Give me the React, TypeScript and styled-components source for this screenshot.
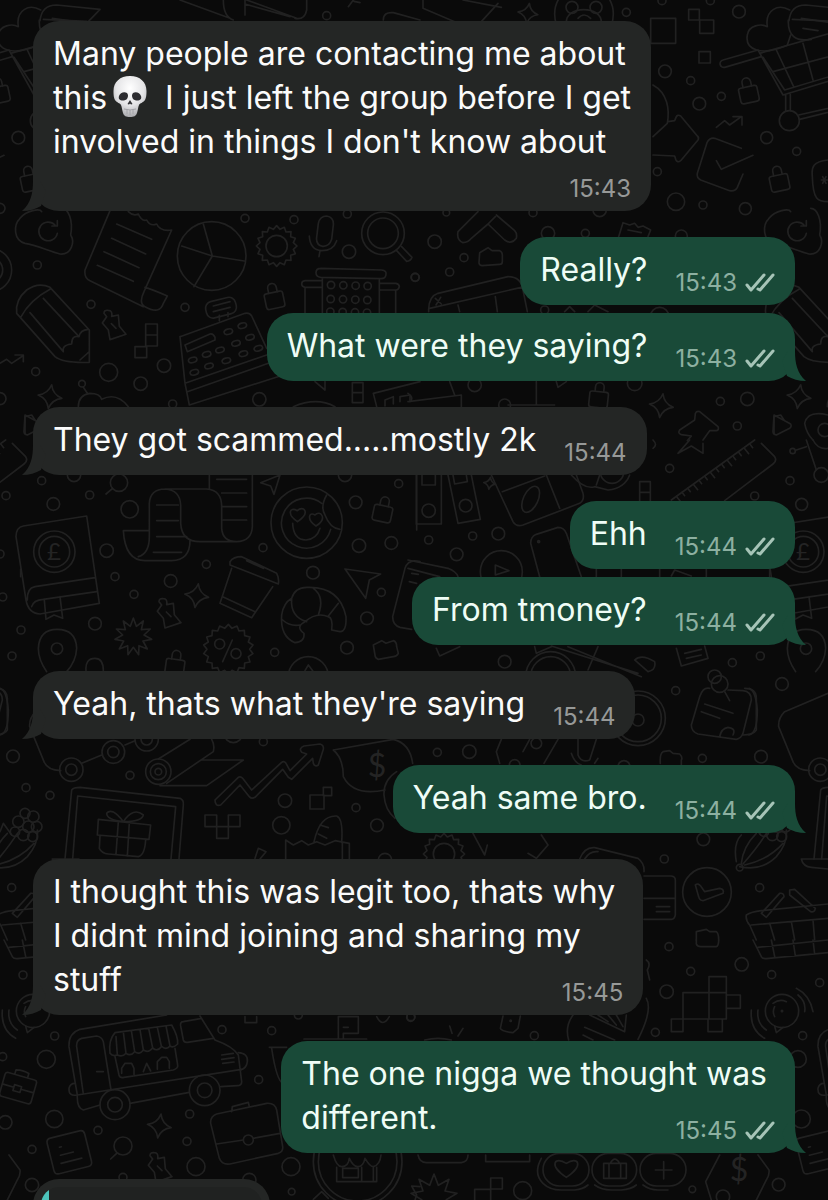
import React, { createContext, useContext } from "react";
import styled, { createGlobalStyle, css } from "styled-components";

const GlobalStyle = createGlobalStyle`
  *, *::before, *::after { box-sizing: border-box; }
  body {
    margin: 0;
    background: #0a0a0a;
    font-family: Inter, "Liberation Sans", sans-serif;
  }
`;

/* ---------- Wallpaper ---------- */

const Wallpaper = styled.svg`
  position: absolute;
  inset: 0;
  width: 100%;
  height: 100%;
  fill: none;
  stroke: #212121;
  stroke-width: 5;
  stroke-linecap: round;
  stroke-linejoin: round;
`;

const Currency = styled.text`
  fill: #242424;
  stroke: none;
  font-family: Lato, sans-serif;
  text-anchor: middle;
`;

type Dot = [number, number, number];

const Rings = ({ at }: { at: Dot[] }) => (
  <>
    {at.map(([cx, cy, r], i) => (
      <circle key={i} cx={cx} cy={cy} r={r} />
    ))}
  </>
);

/* Loose bubbles belong to the middle tile only; its neighbours repeat just the sketches. */
const LooseDots = createContext(true);

const Dots = ({ at }: { at: Dot[] }) => (useContext(LooseDots) ? <Rings at={at} /> : null);

/* Sketches are drawn on a grid three times finer than the page. */
const Region = ({ x, y, children }: { x: number; y: number; children: React.ReactNode }) => (
  <g transform={`translate(${x} ${y}) scale(0.33333)`}>{children}</g>
);

const Sparkle = ({ x, y, s = 36 }: { x: number; y: number; s?: number }) => (
  <path
    transform={`translate(${x} ${y}) rotate(8)`}
    d={`M0 ${-s} Q${s * 0.2} ${-s * 0.2} ${s} 0 Q${s * 0.2} ${s * 0.2} 0 ${s} Q${-s * 0.2} ${s * 0.2} ${-s} 0 Q${-s * 0.2} ${-s * 0.2} 0 ${-s} Z`}
  />
);

const Lock = ({ x, y, turn = -12 }: { x: number; y: number; turn?: number }) => (
  <g transform={`translate(${x} ${y}) rotate(${turn})`}>
    <path d="M-28 -14 Q-28 -20 -20 -20 H20 Q28 -20 28 -14 V20 Q28 28 20 28 H-20 Q-28 28 -28 20 Z" />
    <path d="M-13 -20 V-34 A13 13 0 0 1 13 -34 V-20" />
  </g>
);

const Figurine = ({ x, y }: { x: number; y: number }) => (
  <path
    transform={`translate(${x} ${y})`}
    d="M-20 -25 L-28 -35 Q-28 -46 -15 -44 Q-2 -44 -5 -26 L15 -30 L18 4 L38 28 L-10 44 L-15 15 L-33 -6 Z M-6 -4 L8 10"
  />
);

const Burst = ({ x, y, outer, inner, points }: { x: number; y: number; outer: number; inner: number; points: number }) => {
  const pts = Array.from({ length: points * 2 }, (_, i) => {
    const r = i % 2 ? inner : outer;
    const a = (Math.PI * i) / points - Math.PI / 2;
    return `${Math.round(x + r * Math.cos(a))},${Math.round(y + r * Math.sin(a))}`;
  });
  return <polygon points={pts.join(" ")} />;
};

const Doodles = () => (
  <>
    <Region x={0} y={0}>
      <Dots at={[[980, 47, 12], [55, 413, 19], [0, 625, 15]]} />
      <path d="M540 0 L690 55 M670 0 Q670 50 700 60 M740 0 L890 55 M735 12 L870 50 M920 0 V30 Q915 60 885 55 M735 45 V0 M1150 60 Q1150 35 1180 38 L1260 60" />
      <path d="M120 62 Q125 15 170 15 L300 28 Q270 60 265 64 M130 58 L260 64 M1045 20 L1060 0 M1062 4 L1080 8" />
    </Region>

    <Region x={408} y={0}>
      <Dots
        at={[
          [655, 37, 12], [993, 35, 19], [771, 214, 19], [848, 242, 12], [940, 289, 12], [874, 311, 19],
          [1076, 413, 18], [1166, 454, 12], [748, 515, 12], [804, 605, 26], [885, 615, 12], [1012, 626, 18],
          [762, 2, 12], [907, 2, 12],
        ]}
      />
      <Rings at={[[528, 42, 88], [492, 22, 18], [564, 22, 18], [1144, 362, 30]]} />
      <path d="M728 55 h75 v75 h-75 Z M842 28 h32 v32 h-32 Z M875 60 h42 v40 h-42 Z M873 155 h34 v34 h-34 Z" />
      <path d="M475 70 C470 15 585 15 580 70 M510 55 Q528 35 548 55" />
      <path d="M45 0 V25 L140 65 M165 0 L280 22 M270 10 L220 65" />
      <Sparkle x={360} y={40} s={30} />
      <path d="M1050 150 L945 180 A11 11 0 0 0 950 202 L1060 170 M1050 150 L1125 285 L1290 235 M1055 160 L1300 90 M1105 150 L1158 262 M1185 130 L1215 240 M1095 215 L1280 165 M1065 172 L1130 270 L1290 222 M1133 285 V332 M1147 283 V332 M1172 345 L1290 318 M1175 358 L1290 330" />
      <path d="M1140 135 C1060 170 1010 150 1018 105 C1022 75 1060 70 1078 80 C1070 30 1110 10 1145 30 M1180 55 L1270 68 M1185 85 L1230 92 M1141 60 Q1138 130 1210 118 M1138 135 L1148 105" />
      <Lock x={1022} y={280} />
      <Lock x={1114} y={545} />
      <path d="M925 382 L950 362 L965 375 L1000 350 M975 350 H1002 V375" />
      <path d="M735 255 C780 280 785 330 778 370 L735 410 M735 465 L800 468 L803 478 Q808 490 818 482 L870 420 Q874 413 868 408 L818 348 Q808 342 804 352 L800 362 L780 365" />
      <path d="M1000 445 L920 415 Q905 412 897 428 L868 520 Q865 532 878 540 L965 572 Q982 575 988 562 L1005 522 M925 482 L940 508 L1035 466" />
      <path d="M1260 480 C1215 485 1210 500 1213 530 C1215 600 1230 605 1260 605 M1240 540 h18 M1244 530 l10 20 M1254 530 l-10 20" />
    </Region>

    <Region x={0} y={200}>
      <Dots
        at={[
          [735, 55, 12], [882, 59, 12], [1042, 42, 12], [1047, 155, 20], [112, 195, 12], [273, 313, 12],
          [555, 322, 12], [107, 515, 12], [326, 517, 27], [422, 551, 20], [492, 497, 20], [246, 551, 10],
          [778, 598, 20], [1245, 232, 12], [0, 596, 18], [518, 612, 12],
        ]}
      />
      <Rings
        at={[
          [-30, 210, 65], [-30, 210, 38], [635, 168, 103], [830, 138, 32], [1149, 100, 64], [1149, 100, 46],
          [993, 255, 11], [1030, 256, 11], [1067, 257, 11], [1103, 258, 11], [992, 297, 11], [1029, 298, 11],
          [1066, 299, 11], [1102, 300, 11], [991, 335, 11], [1028, 336, 11], [1065, 337, 11], [1101, 338, 11],
        ]}
      />
      <path d="M60 55 C40 75 40 120 75 130 C110 135 150 155 180 162 C215 165 225 125 212 105 C220 60 205 25 185 25 M60 55 C80 30 120 25 125 35 M165 75 A28 28 0 1 0 172 100 M172 62 V78 H156" />
      <path d="M330 32 L255 210 Q252 235 270 242 L430 320 M385 35 Q400 50 415 42 Q425 65 440 60 Q450 80 470 72 Q480 95 515 90 L432 275 Q415 310 435 320 Q480 345 490 310 L502 288 Q450 265 435 262 M350 72 L455 118 M335 115 L437 162 M312 155 L417 203 M292 196 L400 244" />
      <path d="M610 72 L637 168 L733 183 M637 168 L545 138 M637 168 L582 260" />
      <Burst x={830} y={138} outer={61} inner={51} points={16} />
      <path d="M955 70 Q960 48 980 48 Q1002 52 1000 75 L995 118 Q988 140 968 139 Q947 135 950 112 Z M928 108 Q930 150 965 152 Q1000 152 1010 122 M960 152 L957 170" />
      <path d="M1190 152 L1220 184 Q1232 184 1236 172 L1205 140" />
      <path d="M150 262 Q115 245 80 270 Q45 300 50 340 L165 470 Q190 490 268 487 V390 L150 262 M62 352 Q90 300 150 268 M90 338 L190 455 M130 295 L237 410 M190 455 Q185 435 215 432 Q215 405 237 410 Q240 390 265 388 M240 480 L268 455" />
      <Figurine x={340} y={375} />
      <path d="M437 372 h35 v33 h-35 Z M437 405 h35 v33 h-35 Z M405 440 h35 v33 h-35 Z" />
      <path d="M540 410 L735 340 Q748 337 755 348 L800 445 M540 410 L555 550 L800 465 M555 550 L568 615 L850 525 M562 575 L805 490 M555 435 L630 402 Q640 400 645 412 V420 L562 455 Z M640 318 L690 305 M640 335 L690 322 M658 362 V346 M684 350 V338" />
      <rect x={617} y={298} width={92} height={50} rx={20} transform="rotate(-14 663 323)" />
      {[[685, 395], [727, 377], [660, 450], [708, 430], [750, 412], [620, 463], [578, 480], [627, 498], [679, 482], [730, 461], [775, 445], [583, 517]].map(
        ([cx, cy]) => (
          <ellipse key={`${cx}-${cy}`} cx={cx} cy={cy} rx={13} ry={8} transform={`rotate(-16 ${cx} ${cy})`} />
        )
      )}
      <Lock x={823} y={297} />
      <path d="M962 205 L1145 210 Q1160 212 1158 222 Q1158 236 1142 236 L962 232 Q948 230 948 218 Q948 205 962 205 M915 242 H965 M967 262 H915 Q905 260 905 252 Q905 243 915 242 M1140 250 H1188 Q1198 252 1198 260 Q1196 270 1188 270 H1140 M967 235 V340 M1138 240 V340 M915 265 V340 M1187 272 V340" />
      <Sparkle x={150} y={590} />
      <path d="M235 620 Q235 585 270 580 Q300 580 305 598 Q350 575 385 620 M250 562 L262 580 M0 490 L20 478 L35 490 L68 468 M45 465 H70 V485" />
      <path d="M1057 548 h32 v30 h-32 Z M1057 578 h32 v30 h-32 Z M1120 580 L1260 545 M1120 580 L1130 620 M1155 618 V600 L1180 590 V612 M1200 605 V590 L1230 585 V605 M945 545 L975 570 V545 M880 620 Q950 590 1005 620 M75 700 V650 L95 645 L105 660" />
    </Region>

    <Region x={408} y={200}>
      <Dots
        at={[
          [80, 125, 20], [168, 173, 12], [125, 216, 12], [22, 232, 12], [420, 100, 20], [532, 100, 12],
          [375, 38, 12], [575, 30, 20], [115, 38, 10], [820, 108, 18], [680, 550, 22], [937, 604, 12],
          [1018, 597, 20], [988, 678, 12], [200, 555, 20], [290, 615, 18], [755, 350, 28], [410, 330, 12],
          [1250, 690, 20],
        ]}
      />
      <path d="M210 35 L150 95 Q145 120 165 128 Q180 128 190 115 L240 72 L290 120 Q310 135 325 115 Q328 100 320 92 L265 45 M240 72 L262 50" />
      <path d="M215 158 L240 143 L252 152 H275 Q283 155 283 165 V185 Q283 193 275 193 L222 197 Q213 195 213 188 Z" />
      <path d="M632 110 L645 68 L665 75 L680 70 L690 82 L705 78 L728 90 L720 110 M660 90 L700 98" />
      <path d="M62 335 Q60 290 90 280 L300 230 Q340 230 345 270 L358 335 M65 325 L350 260 M150 315 L155 335 M262 290 L268 335 M82 295 L100 312 M98 292 L84 315 M470 335 L485 320 L500 335 M540 335 L560 315 L600 335" />
      <path d="M0 605 L160 585 V620 M125 545 L140 585 M385 545 V615 M0 580 Q15 590 10 600 M300 615 H440 M445 545 L450 562 L475 545" />
      <Lock x={572} y={595} turn={6} />
      <Sparkle x={760} y={617} />
      <path d="M815 690 L860 660 L862 640 Q866 632 875 635 L930 680 Q934 690 925 692 L905 692 L885 720 M815 690 Q808 700 820 704 L850 708 L838 722" />
      <path d="M1098 645 L1148 672 Q1152 680 1145 685 L1105 705 Q1095 703 1095 695 Z M1260 645 Q1200 630 1190 670 Q1195 700 1215 720" />
    </Region>

    <Region x={0} y={440}>
      <Dots
        at={[
          [125, 122, 12], [222, 105, 20], [357, 128, 26], [269, 165, 12], [18, 167, 12], [160, 192, 19],
          [389, 208, 26], [1035, 105, 20], [1196, 131, 12], [1067, 187, 19], [1077, 317, 20], [1174, 309, 19],
          [789, 323, 12], [619, 373, 12], [512, 423, 19], [320, 332, 20], [345, 410, 12], [402, 463, 12],
          [939, 398, 19], [1101, 535, 19], [1144, 457, 12], [285, 551, 19], [63, 570, 12], [36, 648, 12],
          [1041, 623, 19], [824, 637, 12], [8, 471, 12], [0, 342, 12],
        ]}
      />
      <Rings
        at={[
          [171, 626, 17], [163, 335, 62], [163, 335, 46], [920, 248, 107], [659, 612, 15], [708, 641, 15],
          [925, 710, 60],
        ]}
      />
      <path d="M338 145 L318 162" />
      <path d="M70 258 L260 228 L298 490 L120 522 Q85 520 78 480 L48 290 Q48 262 70 258 M82 480 Q80 445 105 440 L285 413 M130 478 L290 455 M95 500 Q100 480 130 478 M133 480 L138 538 L162 525 L188 535 L180 470" />
      <path d="M370 272 H445 M370 272 Q375 362 435 362 H515 Q570 360 570 302 M415 350 Q448 340 448 290 V190 Q450 148 495 147 H620 Q665 150 665 200 V265 Q668 305 710 305 Q755 303 757 260 V105 M495 147 Q540 150 542 195 V250 Q545 305 600 305 H700 M628 105 V147 M470 195 H535 M470 242 H535 M470 290 H560 M460 337 H545 M650 118 H740 M665 159 H740 M668 200 H740 M670 240 H740" />
      <path d="M782 128 L840 105 L822 163 L812 138 Z M980 165 Q960 200 975 225 Q990 265 1020 268 M965 190 A75 75 0 1 0 992 268 M878 250 Q880 300 918 300 Q950 298 960 265 M893 245 C860 225 868 198 892 212 C908 195 935 215 893 245 M948 258 C920 240 925 213 945 225 C960 208 985 235 948 258" />
      <Lock x={1148} y={217} turn={12} />
      <path d="M690 365 Q700 350 725 350 L830 400 Q838 415 835 432 L690 375 Z M695 385 L660 490 L755 533 L818 440 M668 470 L765 515 M740 362 L790 385" />
      <path d="M875 475 Q885 440 925 442 Q1020 440 1038 530 Q1040 575 1020 575 L995 570 Q1000 535 985 530 Q950 515 915 545 Q885 560 912 580 Q915 605 885 608 Q840 590 845 525 Q850 490 875 475 Q870 530 920 545 M940 445 Q975 470 955 525 M1015 490 L985 528 M848 540 Q870 560 900 555" />
      <path d="M1035 387 L1142 402 L1108 420 L1097 475 Z M1260 365 Q1225 355 1215 385 L1178 530 Q1178 555 1200 562 L1235 568 M1235 400 L1255 403 M1228 425 L1250 430 M1250 105 V270" />
      <Sparkle x={590} y={467} />
      <Figurine x={505} y={520} />
      <Burst x={400} y={590} outer={56} inner={32} points={11} />
      <Burst x={685} y={628} outer={75} inner={64} points={18} />
      <path d="M697 600 L668 665 M140 695 Q115 660 115 625 Q118 568 171 568 Q228 568 230 625 Q228 665 200 695 M258 692 Q255 655 285 655 Q310 655 310 692 M915 692 L925 675 L938 692" />
      <Lock x={525} y={678} turn={8} />
      <path d="M1120 615 L1145 602 L1158 610 L1180 602 Q1190 605 1190 620 L1195 640 Q1190 650 1180 650 L1135 658 Q1125 655 1125 645 Z" />
    </Region>

    <Region x={408} y={440}>
      <Dots
        at={[
          [62, 300, 12], [194, 288, 12], [271, 281, 19], [146, 343, 19], [785, 85, 12], [1040, 168, 12],
          [1146, 122, 12], [1181, 193, 18], [1240, 105, 22], [1154, 33, 8], [290, 665, 19], [973, 668, 12],
          [1057, 648, 12],
        ]}
      />
      <Rings
        at={[
          [62, 212, 20], [173, 197, 19], [280, 395, 63], [392, 305, 3], [612, 95, 35], [428, 710, 75],
          [428, 710, 60], [920, 710, 20],
        ]}
      />
      <path d="M25 105 V252 H100 V105 M42 105 V135 H82 V105 M120 105 L150 250 L217 238 L190 105 M135 105 L140 132 L178 125 L175 105" />
      <Sparkle x={245} y={130} s={18} />
      <path d="M250 105 L315 245 Q325 262 345 255 L515 190 Q530 180 525 160 L505 105 M283 155 L410 108 M415 105 L455 205" />
      <ellipse cx={368} cy={178} rx={22} ry={42} transform="rotate(25 368 178)" />
      <path d="M262 375 V405 L303 392 Z M395 410 L368 310 Q368 290 385 283 L450 262 Q468 262 475 280 L520 410 M0 360 L120 385 Q145 395 150 410 M0 385 L95 410" />
      <path d="M790 180 L1040 0 M1060 10 L1100 50 Q1108 62 1095 72 L950 182 M695 125 h32 v32 h-32 Z M695 157 h32 v32 h-32 Z" />
      {Array.from({ length: 14 }, (_, i) => (
        <path key={i} d={`M${805 + i * 17} ${169 - i * 12} l${i % 3 ? 8 : 13} ${i % 3 ? 10 : 16}`} />
      ))}
      <path d="M810 40 L850 18 L885 40 V10 M810 40 L845 0 M735 0 Q750 15 735 25 M490 105 Q530 150 560 140 L600 150 Q650 145 665 105 M565 135 L575 105" />
      <path d="M1195 0 L1225 90 M1215 0 Q1230 30 1260 25 M1165 30 L1195 20 M565 388 V410 M640 388 V410 M755 388 V410 M790 408 L800 390 L850 408 M895 388 V410 M1085 388 V410" />
      <path d="M85 625 L95 648 L155 620 M380 620 L385 640 L430 620 M570 620 L540 690 M480 620 L700 710 M430 618 L690 700 M680 660 Q700 640 740 665 Q745 690 720 695 Z M805 625 L820 678 L900 655 L890 618 M830 640 L880 628 M835 655 L880 645" />
    </Region>

    <Region x={0} y={680}>
      <Dots
        at={[
          [39, 229, 19], [78, 323, 12], [150, 346, 12], [390, 286, 12], [855, 362, 20], [844, 436, 26],
          [1068, 383, 12], [1131, 436, 19], [35, 623, 12], [790, 185, 12], [700, 160, 28], [1155, 540, 20],
        ]}
      />
      <Rings
        at={[
          [214, 269, 35], [214, 269, 17], [340, 216, 34], [340, 216, 17], [440, 178, 35], [440, 178, 17],
          [475, 275, 38], [475, 275, 24], [475, 275, 10], [75, 400, 15], [100, 410, 17], [55, 425, 17],
          [85, 440, 17], [110, 440, 16], [45, 455, 14], [70, 465, 17], [98, 470, 15],
        ]}
      />
      <path d="M245 250 L305 225 M375 195 L405 182 M475 237 L570 178 M500 310 L640 215 Q645 195 635 178 M605 240 H730 L620 317 H480" />
      <path d="M645 360 L715 292 Q722 288 728 295 L755 330 L845 247 Q852 242 858 250 L870 272 L920 222 L905 217 Q895 205 912 198 L960 192 Q972 195 970 208 L955 255 Q945 262 940 250 L938 235 L875 298 L865 292 L848 268 L765 352 Q755 358 748 350 L720 315 L662 375 Q645 380 645 360" />
      <path d="M1000 210 L1180 178 Q1230 190 1238 250 M1000 210 Q1030 235 1030 290 Q1060 350 1155 330 M1190 275 Q1150 300 1152 345 Q1155 390 1185 415" />
      <path d="M195 537 L215 330 Q220 322 240 322 L540 355 Q552 360 550 375 L537 537 M218 537 L233 348 L527 380 L513 537 M295 418 L452 435 L447 478 L292 465 Z M300 468 L298 505 Q305 520 325 522 L415 530 Q435 525 437 478 M355 425 L348 522 M388 428 L382 528 M370 425 Q320 420 320 400 Q335 380 370 425 Q400 380 430 405 Q425 425 370 425" />
      <path d="M615 405 h35 v35 h-35 Z M685 405 h35 v35 h-35 Z M650 440 h35 v35 h-35 Z M930 345 h42 v42 h-42 Z M970 322 h25 v25 h-25 Z" />
      <path d="M857 537 V480 L880 495 L905 482 L925 495 L950 485 L975 495 L1005 482 L1048 490 V537 M1027 490 V537 M942 485 Q960 405 1010 408 Q1030 415 1025 487 M960 435 L985 443 M955 462 L980 475 M765 535 L775 505 L798 515 L780 537" />
      <path d="M0 455 L10 430 L35 465 M0 25 Q20 30 25 90 Q25 160 0 165" />
    </Region>

    <Region x={408} y={680}>
      <Dots
        at={[
          [803, 32, 12], [1122, 12, 19], [88, 217, 12], [184, 215, 20], [883, 235, 12], [1059, 230, 19],
          [886, 478, 19], [769, 537, 12], [1055, 623, 12], [648, 260, 18], [320, 255, 16],
        ]}
      />
      <Rings
        at={[
          [690, 115, 82], [690, 115, 70], [690, 120, 18], [935, 12, 25], [385, 190, 16], [897, 636, 73],
          [995, 563, 10], [108, 522, 32],
        ]}
      />
      <path d="M905 25 Q885 20 875 50 L850 135 Q850 155 870 162 L985 178 Q1000 175 1005 160 L1030 60 Q1030 35 1005 32 L960 30 M890 72 L975 100 M880 95 L935 115 M935 170 Q940 145 960 142 Q985 145 975 165 M1010 25 Q1045 25 1045 55 V150 Q1035 165 1005 165 M950 35 L965 62" />
      <path d="M1260 40 L1130 95 Q1110 115 1112 140 L1155 245 Q1165 270 1205 272 M820 255 V240 Q825 232 815 222 L795 220 L785 212 L765 215 Q755 220 757 250 M280 178 L265 215 L275 250 M450 178 L408 250 M365 178 L345 215 M510 178 V225 Q520 250 545 240 L565 178 M490 220 Q500 250 520 255 M570 235 L560 250" />
      <Burst x={108} y={522} outer={62} inner={52} points={16} />
      <path d="M195 460 L230 525 L238 495 M360 520 L385 535 L420 495 L400 465 M515 537 Q530 500 560 503 L690 535 Q710 550 708 575 M530 537 Q545 512 570 515 M708 588 H790 Q802 590 802 600 V705 Q800 718 790 718 H708 M708 655 H800 M745 680 H785 M745 695 H785" />
      <path d="M862 615 Q870 608 878 618 L890 635 L935 625 Q950 628 945 640 L885 662 Q875 662 872 650 Z" />
      <path d="M985 545 Q975 490 1000 465 M995 560 Q1060 575 1105 530 Q1140 490 1135 450 M1000 550 Q1005 500 1045 460 M1005 552 Q1050 500 1075 460 M1010 555 Q1080 540 1125 490" />
      <path d="M1180 537 H1260 M1180 537 Q1185 560 1210 562 L1260 567" />
      <path d="M1045 780 L1025 735 Q1012 720 1015 705 Q1030 695 1060 692 L1260 672 M1030 735 L1260 715 M1060 700 L1115 640 Q1128 638 1128 650 L1075 712 Z M1145 630 L1160 628 L1222 685 Q1220 698 1208 695 L1145 645 Z M1085 730 L1100 780 M1150 725 L1160 780 M1215 720 L1220 780 M865 780 V755 L895 748 L905 755 H925 Q932 760 932 780" />
    </Region>

    <Region x={0} y={940}>
      <Dots
        at={[
          [69, 105, 12], [164, 288, 12], [139, 358, 27], [8, 350, 12], [666, 269, 12], [815, 272, 12],
          [776, 419, 12], [569, 522, 12], [561, 604, 12], [16, 547, 20], [163, 537, 26], [294, 571, 12],
          [96, 628, 12], [369, 618, 27], [588, 680, 27], [873, 680, 27], [96, 735, 20], [369, 712, 12],
          [748, 720, 20], [875, 755, 10], [895, 225, 12], [1233, 230, 12],
        ]}
      />
      <Rings
        at={[
          [345, 494, 45], [345, 494, 22], [614, 451, 46], [614, 451, 22], [745, 600, 15], [1073, 665, 133],
          [1073, 665, 118],
        ]}
      />
      <path d="M350 640 L332 657 M300 495 L250 510 Q230 505 232 465 L207 320 Q205 280 240 268 L500 225 M600 228 L645 300 Q700 320 715 345 L725 425 Q725 437 712 437 L662 440 M568 457 L390 490 M232 465 L725 388 M250 462 L230 320 Q228 300 245 295 L290 288 Q305 290 310 305 L333 450 M605 235 L550 245 Q540 245 542 258 L550 300 Q552 308 562 307 L640 295" />
      <path d="M330 340 Q325 300 345 278 L515 255 Q535 290 533 312 Q520 325 510 318 L498 258 M472 262 L484 318 Q498 332 510 318 M446 265 L458 324 Q472 336 484 320 M420 269 L430 330 Q445 340 458 324 M394 272 L404 335 Q418 346 430 330 M370 276 L378 340 Q392 350 404 335 M352 345 Q368 352 378 340 M330 340 Q338 350 352 345 L348 290" />
      <path d="M345 350 L357 405 Q360 415 372 412 L520 390 Q535 385 533 375 L525 325 M365 400 V385 L375 370 H395 L402 385 V403 M430 395 L440 370 L452 393 M472 388 V365 L485 352 H500 L508 365 V385 M715 338 Q745 340 742 365 Q740 385 722 390 M665 345 L700 340 M665 358 L702 353 M668 370 L702 366 M232 465 Q205 470 207 445 Q210 430 225 430 M290 395 H310" />
      <g transform="translate(53 445) rotate(16)">
        <path d="M-48 -30 Q-48 -38 -40 -38 H42 Q50 -38 50 -30 V26 Q50 36 42 36 H-40 Q-48 36 -48 26 Z M-48 0 H-12 M10 0 H50 M-12 -8 h22 v18 h-22 Z M-20 -38 V-52 Q0 -58 20 -52 V-38" />
      </g>
      <g transform="translate(208 637) rotate(-14)">
        <path d="M-58 -42 Q-58 -55 -45 -55 H45 Q58 -55 58 -42 V42 Q58 55 45 55 H-45 Q-58 55 -58 42 Z M-25 -22 h6 M-28 2 H12 M-32 26 H32" />
      </g>
      <Sparkle x={478} y={558} />
      <path d="M632 550 Q630 530 650 522 L800 490 Q825 488 830 510 L848 620 Q850 635 835 640 L690 672 Q665 675 658 655 Z M650 612 L730 600 M760 595 L840 580 M695 515 L697 500 L745 487 L748 500" />
      <Figurine x={478} y={682} />
      <path d="M1000 645 Q1010 680 1025 680 Q1045 680 1048 655 Q1060 680 1073 680 Q1090 680 1095 655 Q1110 680 1120 680 Q1140 675 1143 645 M1010 682 V725 H1130 V682 M1085 682 V725 M1120 682 V725 M1028 685 h47 v28 h-47 Z" />
      <path d="M735 230 V248 H770 V230 M1015 297 V230 H1075 V280 H1030 V297 M1030 262 H1045 M912 297 H1100 M808 322 H860 M815 325 Q830 425 850 430 M1130 230 Q1148 265 1168 230 M1260 740 L1235 738 L1250 765 L1245 780 M940 778 L965 755 L985 775" />
    </Region>

    <Region x={408} y={940}>
      <Dots
        at={[
          [783, 20, 12], [1001, 73, 20], [848, 94, 12], [1091, 104, 12], [1235, 128, 12], [776, 155, 20],
          [742, 277, 12], [379, 287, 12], [1184, 287, 12], [1170, 357, 25], [1180, 537, 27], [344, 752, 27],
          [853, 748, 10], [1112, 734, 19], [8, 232, 12], [945, 770, 20],
        ]}
      />
      <Rings at={[[1122, 213, 50], [1122, 213, 2], [308, 242, 2]]} />
      <path d="M1035 0 L1060 50 Q1065 57 1075 56 L1260 38 M1050 22 L1260 0 M1090 0 L1100 50 M1155 0 L1162 48 M1215 0 L1220 42 M865 0 V12 Q868 20 878 20 H925 Q932 18 932 0" />
      <path d="M903 110 h52 v48 h-52 Z M825 158 h78 v79 h-78 Z M955 165 h42 v40 h-42 Z M903 158 h52 v79 h-52 Z M790 237 h35 v38 h-35 Z M900 237 h43 v38 h-43 Z" />
      <path d="M1100 258 L1105 278 L1125 262 M1095 190 Q1115 175 1135 185 M1100 230 Q1092 215 1100 200 M1170 165 Q1195 185 1190 215 M1165 145 Q1205 165 1215 215 M1050 210 Q1045 250 1075 270 M1030 210 Q1025 270 1070 295" />
      <path d="M495 225 Q470 260 482 300 M715 175 Q735 210 690 298 M545 225 L650 275 L655 225 M530 262 L620 300 M525 285 L555 300 M570 225 L600 245 M600 225 L625 255 M625 225 L645 260 M285 228 L277 265 Q280 275 315 278 L330 265 L337 228 M125 258 L132 280 M165 265 L150 288 M50 300 Q90 290 130 300 M715 60 Q730 70 718 90 L725 120" />
      <path d="M30 645 Q35 668 55 668 H160 Q180 665 180 645 M233 645 V665 H365 V645 M400 655 Q375 700 405 730 Q425 750 460 750 H500 Q525 748 540 735 M560 735 Q580 750 610 750 H640 Q670 748 685 735 M705 735 Q725 750 750 750 H780" />
      <rect x={405} y={640} width={138} height={98} rx={49} />
      <rect x={552} y={640} width={134} height={98} rx={49} />
      <rect x={696} y={640} width={138} height={98} rx={49} />
      <path d="M475 712 C420 675 440 648 475 670 C510 648 530 675 475 712 M587 670 h68 v45 h-68 Z M603 670 V715 M638 670 V715 M607 670 Q620 645 635 670 M742 690 H792 M767 665 V717" />
      <Burst x={78} y={772} outer={70} inner={38} points={9} />
      <path d="M248 714 h35 v33 h-35 Z M200 780 V748 H248 V780 M935 645 L893 725 L910 780 M1050 645 L1083 690 Q1085 705 1075 720 L1045 780" />
    </Region>
  </>
);

const TILE = 749;

const signs = [
  { x: 54, y: 560, size: 24, sign: "£" },
  { x: 803, y: 560, size: 24, sign: "£" },
  { x: 377, y: 777, size: 32, sign: "$" },
  { x: 739, y: 1181, size: 32, sign: "$" },
];

/* ---------- Conversation ---------- */

const Screen = styled.main`
  position: relative;
  height: 100vh;
  overflow: hidden;
  background: #0a0a0a;
`;

const Thread = styled.ol`
  position: relative;
  display: flex;
  flex-direction: column;
  gap: 26px;
  margin: 0;
  padding: 21px 33px;
  list-style: none;
`;

const Turn = styled.li<{ $sent: boolean }>`
  display: flex;
  flex-direction: column;
  align-items: ${(p) => (p.$sent ? "flex-end" : "flex-start")};
  gap: 8px;
`;

const Body = styled.p`
  margin: 0;
  padding-bottom: 1px;
  font-size: 32px;
  line-height: 44px;
`;

const Meta = styled.footer<{ $sent: boolean }>`
  display: flex;
  align-items: center;
  align-self: end;
  justify-self: end;
  gap: 8px;
  font-size: 24px;
  line-height: 20px;
  color: ${(p) => (p.$sent ? "#8db0a1" : "#979998")};
`;

type Layout = "inline" | "below" | "overlap";

const layouts = {
  inline: css`
    display: flex;
    align-items: flex-end;
    gap: 28px;
  `,
  below: css`
    display: flex;
    flex-direction: column;
    gap: 14px;
  `,
  overlap: css`
    display: grid;
    ${Body}, ${Meta} {
      grid-area: 1 / 1;
    }
    ${Body} {
      padding-right: 8px;
    }
  `,
};

const Bubble = styled.article<{ $sent: boolean; $layout: Layout }>`
  position: relative;
  max-width: 640px;
  padding: 11px 20px 12px;
  border-radius: 26px;
  background: ${(p) => (p.$sent ? "#194a38" : "#242625")};
  color: ${(p) => (p.$sent ? "#effdf6" : "#fbfbfb")};
  ${(p) => layouts[p.$layout]}
`;

const Ticks = styled.svg`
  width: 30px;
  height: 20px;
  fill: none;
  stroke: #a6c4b7;
  stroke-width: 3;
  stroke-linecap: round;
  stroke-linejoin: round;
`;

const Tail = styled.svg<{ $sent: boolean }>`
  position: absolute;
  bottom: 0;
  ${(p) => (p.$sent ? "right: -11px;" : "left: -11px; transform: scaleX(-1);")}
  width: 24px;
  height: 30px;
  fill: ${(p) => (p.$sent ? "#194a38" : "#242625")};
`;

const Emoji = styled.svg`
  width: 34px;
  height: 42px;
  margin: 0 9px 0 6px;
  vertical-align: -9px;
`;

const ReplyBubble = styled(Bubble)`
  width: 237px;
  height: 120px;
  padding: 8px;
`;

const Quote = styled.blockquote`
  height: 68px;
  margin: 0;
  border-radius: 18px;
  background: linear-gradient(to right, #4cc4bc 8px, #202221 8px);
`;

const Skull = () => (
  <Emoji viewBox="0 0 34 42" role="img" aria-label="skull">
    <defs>
      <radialGradient id="bone" cx="0.5" cy="0.3" r="0.7">
        <stop offset="0" stopColor="#ffffff" />
        <stop offset="0.6" stopColor="#e4e4e6" />
        <stop offset="1" stopColor="#a9a9ad" />
      </radialGradient>
    </defs>
    <path
      fill="url(#bone)"
      d="M17 0 C27 0 33.500 6 33.500 15 C33.500 20 33 22 32 24 C30 27 27 27 26 29 C25 31 25 34 24 37 C23 40 21 41 17 41 C13 41 11 40 10 37 C9 34 9 31 8 29 C7 27 4 27 2 24 C1 22 0.500 20 0.500 15 C0.500 6 7 0 17 0 Z"
    />
    <path fill="#2d2d30" d="M6 20 C7 17 11 15 14 17 C16 19 15 24 11 24.500 C7 25 5 23 6 20 Z M28 20 C27 17 23 15 20 17 C18 19 19 24 23 24.500 C27 25 29 23 28 20 Z" />
    <path fill="#333336" d="M17 24 L19.500 28 Q18 29 17 27.500 Q16 29 14.500 28 Z" />
    <path fill="none" stroke="#a2a2a7" strokeWidth="1" d="M11 33 Q17 35 23 33 M14 33 V38 M17 34 V39 M20 33 V38" />
  </Emoji>
);

interface MessageData {
  body: React.ReactNode;
  time: string;
  layout?: Layout;
  tail?: boolean;
}

interface TurnData {
  sent: boolean;
  messages: MessageData[];
}

const turns: TurnData[] = [
  {
    sent: false,
    messages: [
      {
        body: (
          <>
            Many people are contacting me about
            <br />
            this
            <Skull /> I just left the group before I get
            <br />
            involved in things I don't know about
          </>
        ),
        time: "15:43",
        layout: "below",
        tail: true,
      },
    ],
  },
  {
    sent: true,
    messages: [
      { body: "Really?", time: "15:43" },
      { body: "What were they saying?", time: "15:43", tail: true },
    ],
  },
  { sent: false, messages: [{ body: "They got scammed.....mostly 2k", time: "15:44", tail: true }] },
  {
    sent: true,
    messages: [
      { body: "Ehh", time: "15:44" },
      { body: "From tmoney?", time: "15:44", tail: true },
    ],
  },
  { sent: false, messages: [{ body: "Yeah, thats what they're saying", time: "15:44", tail: true }] },
  { sent: true, messages: [{ body: "Yeah same bro.", time: "15:44", tail: true }] },
  {
    sent: false,
    messages: [
      {
        body: (
          <>
            I thought this was legit too, thats why
            <br />
            I didnt mind joining and sharing my
            <br />
            stuff
          </>
        ),
        time: "15:45",
        layout: "overlap",
        tail: true,
      },
    ],
  },
  {
    sent: true,
    messages: [
      {
        body: (
          <>
            The one nigga we thought was
            <br />
            different.
          </>
        ),
        time: "15:45",
        layout: "overlap",
        tail: true,
      },
    ],
  },
];

const Message = ({ sent, body, time, layout = "inline", tail }: MessageData & { sent: boolean }) => (
  <Bubble $sent={sent} $layout={layout}>
    {tail && (
      <Tail $sent={sent} viewBox="0 0 24 30" aria-hidden="true">
        <path d="M13 0 C13 12 15 22 24 30 C17 30 10 28 5 25 L0 10 L6 0 Z" />
      </Tail>
    )}
    <Body>{body}</Body>
    <Meta $sent={sent}>
      <time>{time}</time>
      {sent && (
        <Ticks viewBox="0 0 30 20" role="img" aria-label="Delivered">
          <path d="M2 12 L6 17 L19 2 M13 16 L15 17 L28 2" />
        </Ticks>
      )}
    </Meta>
  </Bubble>
);

export default function App() {
  return (
    <>
      <GlobalStyle />
      <Screen>
        <Wallpaper viewBox="0 0 828 1200" preserveAspectRatio="xMinYMin slice" aria-hidden="true">
          {[-TILE, 0, TILE].map((offset) => (
            <LooseDots.Provider key={offset} value={offset === 0}>
              <g transform={`translate(${offset} 0)`}>
                <Doodles />
              </g>
            </LooseDots.Provider>
          ))}
          {signs.map(({ x, y, size, sign }) => (
            <Currency key={x} x={x} y={y} fontSize={size}>
              {sign}
            </Currency>
          ))}
        </Wallpaper>
        <Thread>
          {turns.map((turn, i) => (
            <Turn key={i} $sent={turn.sent}>
              {turn.messages.map((message, j) => (
                <Message key={j} sent={turn.sent} {...message} />
              ))}
            </Turn>
          ))}
          <Turn $sent={false}>
            <ReplyBubble $sent={false} $layout="below">
              <Quote />
            </ReplyBubble>
          </Turn>
        </Thread>
      </Screen>
    </>
  );
}
